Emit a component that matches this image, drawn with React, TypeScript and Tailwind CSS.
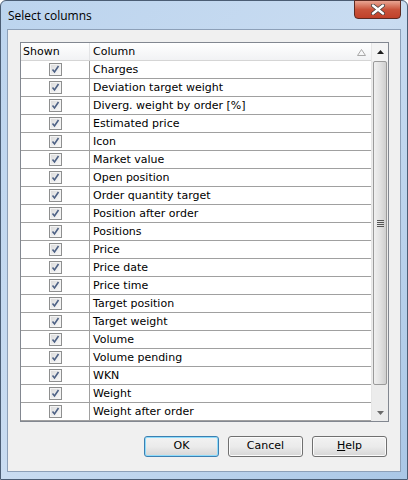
import React from 'react';

const columns = [
  'Charges',
  'Deviation target weight',
  'Diverg. weight by order [%]',
  'Estimated price',
  'Icon',
  'Market value',
  'Open position',
  'Order quantity target',
  'Position after order',
  'Positions',
  'Price',
  'Price date',
  'Price time',
  'Target position',
  'Target weight',
  'Volume',
  'Volume pending',
  'WKN',
  'Weight',
  'Weight after order',
];

const CheckBox = () => (
  <svg width="13" height="13" viewBox="0 0 13 13">
    <defs>
      <linearGradient id="cbg" x1="0" y1="0" x2="1" y2="1">
        <stop offset="0" stopColor="#dcdcdc" />
        <stop offset="1" stopColor="#f8f8f8" />
      </linearGradient>
    </defs>
    <rect x="0.5" y="0.5" width="12" height="12" fill="#f4f4f4" stroke="#8e8f8f" />
    <rect x="2" y="2" width="9" height="9" fill="url(#cbg)" />
    <path d="M3.5 6.5 L5.5 9 L9.5 3" fill="none" stroke="#4d6185" strokeWidth="1.6" />
  </svg>
);

const Btn = ({ children, focused }: { children: React.ReactNode; focused?: boolean }) => (
  <button
    className={
      'w-[75px] h-[21px] rounded-[3px] border text-[11px] text-black bg-gradient-to-b from-[#f2f2f2] via-[#ebebeb] to-[#d6d6d6] ' +
      (focused ? 'border-[#3c7fb1] shadow-[inset_0_0_0_1px_#8fdcfb]' : 'border-[#707070] shadow-[inset_0_0_0_1px_#fbfbfb]')
    }
  >
    {children}
  </button>
);

export default function App() {
  return (
    <div
      className="w-[408px] h-[480px] flex flex-col rounded-t-[6px] border border-[#4b5d74] bg-gradient-to-br from-[#bcd4ee] via-[#c9dcf1] to-[#aac7e6]"
      style={{ fontFamily: '"DejaVu Sans", Tahoma, sans-serif' }}
    >
      <div className="relative h-[28px] shrink-0 flex items-center pl-[7px] pt-[1px]">
        <span className="text-[12px] text-black" style={{ fontFamily: '"Open Sans", "Segoe UI", sans-serif' }}>
          Select columns
        </span>
        <div className="absolute top-[-1px] right-[6px] w-[47px] h-[19px] rounded-b-[4px] border border-[#5c2a22] bg-gradient-to-b from-[#e8a593] via-[#c9533b] to-[#c0412a] flex items-center justify-center">
          <svg width="14" height="11" viewBox="0 0 14 11">
            <path d="M2 1.5 L12 9.5 M12 1.5 L2 9.5" stroke="#3a3a3a" strokeWidth="3.8" strokeLinecap="round" />
            <path d="M2 1.5 L12 9.5 M12 1.5 L2 9.5" stroke="#ffffff" strokeWidth="2.4" strokeLinecap="round" />
          </svg>
        </div>
      </div>
      <div className="mx-[6px] h-[443px] border border-[#8da0b8] bg-[#f0f0f0] flex flex-col pl-[12px] pt-[12px]">
        <div className="w-[369px] h-[380px] border border-[#828790] bg-white flex text-[11px] text-black">
          <div className="flex-1 flex flex-col">
            <div className="h-[18px] flex bg-gradient-to-b from-white to-[#f1f2f4] border-b border-[#d5d5d5]">
              <div className="w-[69px] pl-[2px] pt-[2px] flex items-center border-r border-[#e3e4e6]">Shown</div>
              <div className="flex-1 pl-[3px] pt-[2px] flex items-center justify-between pr-[5px]">
                <span>Column</span>
                <svg width="9" height="7" viewBox="0 0 9 7">
                  <path d="M4.5 0.5 L8.5 6.5 L0.5 6.5 Z" fill="none" stroke="#a8a8a8" />
                </svg>
              </div>
            </div>
            {columns.map((c) => (
              <div key={c} className="h-[18px] flex border-b border-[#a0a0a0]">
                <div className="w-[69px] flex items-center justify-center border-r border-[#a0a0a0] pl-[1px]">
                  <CheckBox />
                </div>
                <div className="flex-1 pl-[3px] pt-[2px] flex items-center">{c}</div>
              </div>
            ))}
          </div>
          <div className="w-[17px] flex flex-col bg-[#ececec] border-l border-[#e6e6e6]">
            <div className="h-[18px] flex items-center justify-center bg-[#f4f4f4]">
              <svg width="7" height="4" viewBox="0 0 7 4">
                <path d="M3.5 0 L7 4 L0 4 Z" fill="#1e1e1e" />
              </svg>
            </div>
            <div className="mx-[1px] h-[324px] rounded-[2px] border border-[#9a9a9a] bg-gradient-to-r from-[#f0f0f0] via-[#e2e2e2] to-[#cfcfcf] flex items-center justify-center">
              <div className="flex flex-col gap-[1px]">
                <div className="w-[7px] h-[1px] bg-[#555]" />
                <div className="w-[7px] h-[1px] bg-[#555]" />
                <div className="w-[7px] h-[1px] bg-[#555]" />
                <div className="w-[7px] h-[1px] bg-[#555]" />
              </div>
            </div>
            <div className="flex-1" />
            <div className="h-[17px] flex items-center justify-center">
              <svg width="7" height="4" viewBox="0 0 7 4">
                <path d="M0 0 L7 0 L3.5 4 Z" fill="#6a6a6a" />
              </svg>
            </div>
          </div>
        </div>
        <div className="flex gap-[9px] mt-[14px] ml-[124px]">
          <Btn focused>OK</Btn>
          <Btn>Cancel</Btn>
          <Btn>
            <span className="underline">H</span>elp
          </Btn>
        </div>
      </div>
    </div>
  );
}
